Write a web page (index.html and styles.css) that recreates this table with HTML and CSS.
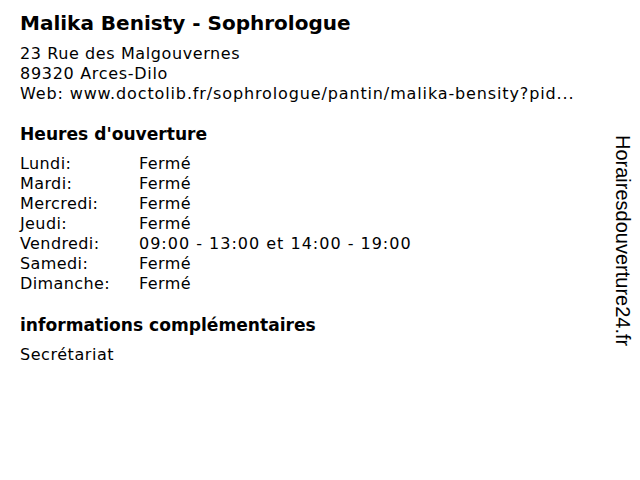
FILE: index.html
```html
<!DOCTYPE html>
<html>
<head>
<meta charset="utf-8">
<link rel="stylesheet" href="styles.css">
</head>
<body>
<div class="page">
  <main class="content">
    <h1 class="title">Malika Benisty - Sophrologue</h1>
    <div class="address">
      <div class="street">23 Rue des Malgouvernes</div>
      <div class="city">89320 Arces-Dilo</div>
      <div class="web">Web: www.doctolib.fr/sophrologue/pantin/malika-bensity?pid...</div>
    </div>
    <h2 class="section">Heures d'ouverture</h2>
    <div class="hours">
      <span class="day">Lundi:</span><span class="closed">Fermé</span>
      <span class="day">Mardi:</span><span class="closed">Fermé</span>
      <span class="day">Mercredi:</span><span class="closed">Fermé</span>
      <span class="day">Jeudi:</span><span class="closed">Fermé</span>
      <span class="day">Vendredi:</span><span class="open">09:00 - 13:00 et 14:00 - 19:00</span>
      <span class="day">Samedi:</span><span class="closed">Fermé</span>
      <span class="day">Dimanche:</span><span class="closed">Fermé</span>
    </div>
    <h2 class="section section-info">informations complémentaires</h2>
    <div class="info">Secrétariat</div>
  </main>
  <aside class="brand"><span class="brand-text">Horairesdouverture24.fr</span></aside>
</div>
</body>
</html>
```

FILE: styles.css
```css
html, body {
  margin: 0;
  padding: 0;
  background: #fff;
}
body {
  font-family: "DejaVu Sans", sans-serif;
  color: #000;
}
.page {
  display: flex;
  width: 640px;
  height: 480px;
}
.content {
  flex: 1;
  padding: 11px 0 0 20px;
}
.title {
  margin: 0;
  font-size: 20px;
  font-weight: bold;
  line-height: 24px;
}
.address {
  margin-top: 9px;
  font-size: 16px;
  line-height: 20px;
}
.street { letter-spacing: 0.6px; }
.city { letter-spacing: 0.7px; }
.web { letter-spacing: 0.87px; }
.section {
  margin: 20px 0 0 0;
  font-size: 17.1px;
  font-weight: bold;
  line-height: 20px;
}
.section-info {
  margin-top: 21px;
}
.hours {
  margin-top: 10px;
  display: grid;
  grid-template-columns: 119px auto;
  font-size: 16px;
  line-height: 20px;
}
.day { letter-spacing: 0.4px; }
.closed { letter-spacing: 0.4px; }
.open { letter-spacing: 1px; }
.info {
  margin-top: 10px;
  font-size: 16px;
  line-height: 20px;
  letter-spacing: 0.55px;
}
.brand {
  width: 40px;
  display: flex;
  justify-content: flex-start;
  padding: 135px 0 0 13px;
  box-sizing: border-box;
}
.brand-text {
  writing-mode: vertical-rl;
  font-family: "Liberation Sans", Arial, sans-serif;
  font-size: 20px;
  color: #000;
  line-height: 20px;
  height: fit-content;
}
```
